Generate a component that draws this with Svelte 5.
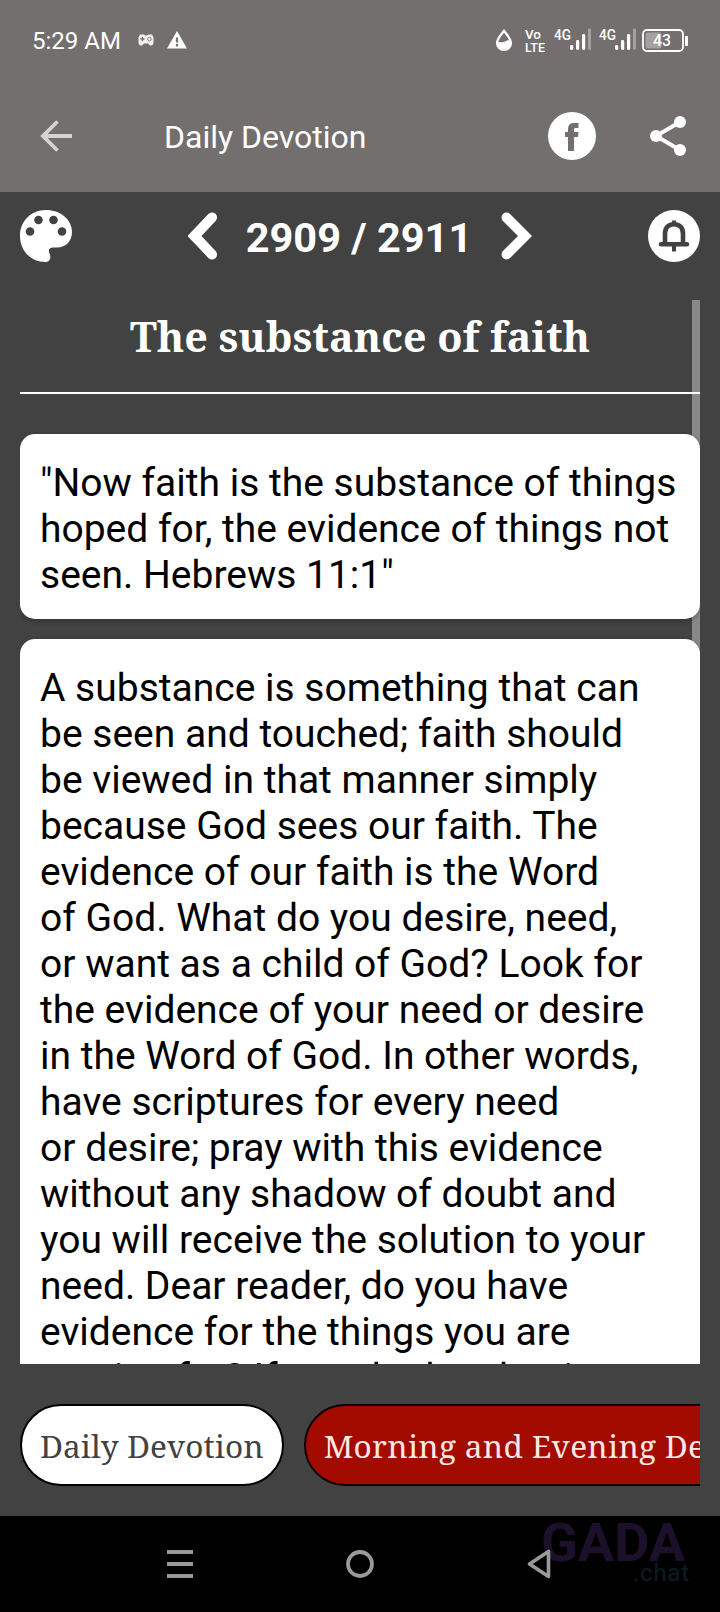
<script lang="ts">
  let page: number = $state(2909);
  const total = 2911;

  const verse = [
    '"Now faith is the substance of things',
    "hoped for, the evidence of things not",
    'seen. Hebrews 11:1"',
  ];

  const body = [
    "A substance is something that can",
    "be seen and touched; faith should",
    "be viewed in that manner simply",
    "because God sees our faith. The",
    "evidence of our faith is the Word",
    "of God. What do you desire, need,",
    "or want as a child of God? Look for",
    "the evidence of your need or desire",
    "in the Word of God. In other words,",
    "have scriptures for every need",
    "or desire; pray with this evidence",
    "without any shadow of doubt and",
    "you will receive the solution to your",
    "need. Dear reader, do you have",
    "evidence for the things you are",
    "praying for? If you do then begin",
  ];

  function prev() {
    if (page > 1) page -= 1;
  }

  function next() {
    if (page < total) page += 1;
  }
</script>

{#snippet signal()}
  <svg class="signal" width="37" height="24" viewBox="0 0 37 24" fill="#fff">
    <text x="0" y="11.5" font-size="14.5" font-weight="500" textLength="17" lengthAdjust="spacingAndGlyphs">4G</text>
    <rect x="16" y="17" width="3.2" height="5" rx="1.4" />
    <rect x="22" y="12" width="3.2" height="10" rx="1.4" />
    <rect x="28" y="6" width="3.2" height="16" rx="1.4" />
    <rect x="34" y="0.5" width="3" height="21.5" rx="1.4" opacity="0.35" />
  </svg>
{/snippet}

<div class="screen">
  <div class="status">
    <span class="time">5:29 AM</span>
    <svg class="gamepad" width="16" height="12" viewBox="0 0 16 12">
      <path d="M2 .5h4l1 1h2l1-1h4l1.500 3v6L14 11.500h-2L10 9.500H6l-2 2H2L.5 9.500v-6z" fill="#f0efef" />
      <path d="M4.500 3v4M2.500 5h4" stroke="#736f6e" stroke-width="1.300" />
      <circle cx="11.500" cy="5" r="1.800" fill="none" stroke="#8b8786" />
    </svg>
    <svg class="warning" width="20" height="18" viewBox="0 0 20 18">
      <path d="M10 0l10 17.500H0z" fill="#fff" />
      <path d="M10 6.500v5M10 13v2.400" stroke="#736f6e" stroke-width="2.200" />
    </svg>
    <div class="indicators">
      <svg class="drop" width="18" height="23" viewBox="0 0 18 23">
        <path d="M9 1.800C6.500 5.200 2 9.800 2 14a7 7 0 0 0 14 0c0-4.200-4.500-8.800-7-12.200z" fill="none" stroke="#fff" stroke-width="2.200" />
        <path d="M2 14c3-2.500 5 .5 8-1.500 2-1.400 3.500-1.500 5-1l1 3a7 7 0 0 1-14 0z" fill="#fff" />
      </svg>
      <svg class="volte" width="20" height="25" viewBox="0 0 20 25">
        <text x="0" y="11" font-size="13.5" font-weight="500" textLength="16" lengthAdjust="spacingAndGlyphs">Vo</text>
        <text x="0" y="23.5" font-size="13.5" font-weight="500" textLength="20" lengthAdjust="spacingAndGlyphs">LTE</text>
      </svg>
      {@render signal()}
      {@render signal()}
      <svg class="battery" width="46" height="23" viewBox="0 0 46 23">
        <rect x="1" y="1" width="40" height="21" rx="4" fill="none" stroke="#fff" stroke-width="1.800" />
        <rect x="3.500" y="3.500" width="16" height="16" rx="2" fill="#a4a1a0" />
        <rect x="43" y="7" width="3" height="10" rx="1" fill="#fff" />
        <text x="11" y="17" font-size="16.500" font-weight="500" textLength="18" lengthAdjust="spacingAndGlyphs">43</text>
      </svg>
    </div>
  </div>

  <header>
    <button class="back" aria-label="Back">
      <svg width="32" height="32" viewBox="0 0 32 32" fill="none" stroke="#d5d4d3" stroke-width="3.800">
        <path d="M32 16H3M17.500 1.500L3 16l14.500 14.500" />
      </svg>
    </button>
    <span class="app-title">Daily Devotion</span>
    <button class="facebook" aria-label="Facebook">
      <svg width="48" height="48" viewBox="0 0 48 48">
        <circle cx="24" cy="24" r="24" fill="#fff" />
        <path d="M20 39V25h-3v-5h3v-2.500c0-4.500 2-6.500 6-6.500h4.500v5H27.500c-1.200 0-1.500.6-1.500 1.600V20h4.500l-.5 5h-4v14z" fill="#736f6e" />
      </svg>
    </button>
    <button class="share" aria-label="Share">
      <svg width="36" height="40" viewBox="0 0 36 40" fill="#fff">
        <path d="M30 6L6 20l24 14" fill="none" stroke="#fff" stroke-width="4" />
        <circle cx="30" cy="6" r="6" />
        <circle cx="6" cy="20" r="6" />
        <circle cx="30" cy="34" r="6" />
      </svg>
    </button>
  </header>

  <div class="pager">
    <button aria-label="Theme">
      <svg width="52" height="52" viewBox="0 0 52 52">
        <path d="M26 0C40 0 52 9 52 22c0 9-6 15.500-15 15.500h-4c-4 0-5 3-3.500 6 2 4 .5 8.500-4 8.500C11 52 0 41 0 26S11 0 26 0z" fill="#fff" />
        <g fill="#424242">
          <circle cx="10" cy="21.500" r="4.300" />
          <circle cx="18.500" cy="10" r="4.300" />
          <circle cx="33.500" cy="10" r="4.300" />
          <circle cx="42" cy="21.500" r="4.300" />
        </g>
      </svg>
    </button>
    <div class="counter">
      <button aria-label="Previous" onclick={prev}>
        <svg width="30" height="48" viewBox="0 0 30 48" fill="none" stroke="#fff" stroke-width="10" stroke-linecap="round">
          <path d="M24 5.500L6.500 24 24 42.500" />
        </svg>
      </button>
      <span class="count">{page} / {total}</span>
      <button aria-label="Next" onclick={next}>
        <svg width="32" height="48" viewBox="0 0 32 48" fill="none" stroke="#fff" stroke-width="10" stroke-linecap="round">
          <path d="M6.500 5.500L25 24 6.500 42.500" />
        </svg>
      </button>
    </div>
    <button aria-label="Reminder">
      <svg width="52" height="52" viewBox="0 0 52 52">
        <circle cx="26" cy="26" r="26" fill="#fff" />
        <path d="M13 34.300h26M17 33V23.500c0-6 3.500-9.300 9-9.300s9 3.300 9 9.300V33" fill="none" stroke="#424242" stroke-width="4.600" stroke-linecap="round" />
        <path d="M26 10.500v4M26 36v5.500" stroke="#424242" stroke-width="4" />
      </svg>
    </button>
  </div>

  <main>
    <div class="scrollbar"></div>
    <h1>The substance of faith</h1>
    <div class="card">
      {#each verse as line}
        <p>{line}</p>
      {/each}
    </div>
    <div class="card">
      {#each body as line}
        <p>{line}</p>
      {/each}
    </div>
  </main>

  <div class="tabs">
    <button class="tab active">Daily Devotion</button>
    <button class="tab">Morning and Evening Devotion</button>
  </div>

  <nav>
    <svg width="26" height="28" viewBox="0 0 26 28" stroke="#999" stroke-width="4">
      <path d="M0 2h26M0 14h26M0 26h26" />
    </svg>
    <svg width="28" height="28" viewBox="0 0 28 28" fill="none" stroke="#999" stroke-width="3.800">
      <circle cx="14" cy="14" r="12" />
    </svg>
    <svg width="24" height="30" viewBox="0 0 24 30" fill="none" stroke="#999" stroke-width="3.600" stroke-linejoin="round">
      <path d="M21.500 2.500v25L2.500 15z" />
    </svg>
    <svg class="watermark" width="150" height="64" viewBox="0 0 150 64">
      <text x="0" y="41" font-size="53" font-weight="700" textLength="144" lengthAdjust="spacingAndGlyphs">GADA</text>
      <text class="dot-chat" x="92" y="61" font-size="24" textLength="56">.chat</text>
    </svg>
  </nav>
</div>

<style>
  :global(body) {
    margin: 0;
    background: #424242;
  }
  .screen {
    display: flex;
    flex-direction: column;
    width: 720px;
    height: 1612px;
    overflow: hidden;
    background: #424242;
    font-family: Roboto, sans-serif;
  }
  button {
    padding: 0;
    border: none;
    background: none;
    font: inherit;
    cursor: pointer;
  }
  svg {
    display: block;
    flex-shrink: 0;
  }
  svg text {
    fill: #fff;
  }
  .status {
    display: flex;
    align-items: center;
    box-sizing: border-box;
    height: 80px;
    padding: 0 32px;
    background: #736f6e;
    color: #fff;
  }
  .time {
    width: 106px;
    padding-top: 1px;
    font-size: 24px;
    white-space: nowrap;
  }
  .warning {
    margin-left: 13px;
  }
  .indicators {
    display: flex;
    align-items: center;
    gap: 8px;
    margin-left: auto;
  }
  .volte {
    margin: 0 1px 0 4px;
    overflow: visible;
  }
  .battery {
    margin-left: -2px;
  }
  header {
    display: flex;
    align-items: center;
    box-sizing: border-box;
    height: 112px;
    padding: 0 34px 0 40px;
    background: #736f6e;
    color: #fff;
  }
  .app-title {
    flex: 1;
    margin-left: 92px;
    padding-top: 2px;
    font-size: 32px;
  }
  .share {
    margin-left: 54px;
  }
  .pager {
    display: flex;
    align-items: center;
    justify-content: space-between;
    height: 88px;
    padding: 0 20px;
  }
  .counter {
    display: flex;
    align-items: center;
  }
  .count {
    width: 282px;
    padding-top: 3px;
    color: #fff;
    font-size: 41.5px;
    font-weight: 700;
    text-align: center;
  }
  main {
    position: relative;
    display: flex;
    flex-direction: column;
    height: 1064px;
    margin: 20px 20px 0;
    overflow: hidden;
  }
  .scrollbar {
    position: absolute;
    top: 0;
    right: 0;
    width: 8px;
    height: 400px;
    background: #888;
  }
  h1 {
    position: relative;
    flex-shrink: 0;
    box-sizing: border-box;
    height: 94px;
    margin: 0 0 40px;
    border-bottom: 2px solid #fff;
    color: #fff;
    font: 700 41.2px/73px "Noto Serif", "Droid Serif", serif;
    text-align: center;
  }
  .card {
    position: relative;
    flex-shrink: 0;
    margin-bottom: 20px;
    padding: 26px 20px 21px;
    border-radius: 15px;
    background: #fff;
    box-shadow: 0 2px 5px rgba(0, 0, 0, 0.25);
    color: #000;
  }
  p {
    margin: 0;
    font-size: 39px;
    line-height: 46px;
    white-space: nowrap;
  }
  .tabs {
    display: flex;
    gap: 20px;
    height: 82px;
    margin: 40px 20px 30px;
    overflow: hidden;
  }
  .tab {
    flex-shrink: 0;
    box-sizing: border-box;
    padding: 0 18px;
    border: 2px solid #100000;
    border-radius: 41px;
    background: #a30b00;
    color: #fde8e6;
    font: 31.6px "Noto Serif", "Droid Serif", serif;
    letter-spacing: 0.28px;
  }
  .active {
    border-color: #000;
    background: #fff;
    color: #424242;
    letter-spacing: 0.05px;
  }
  nav {
    position: relative;
    isolation: isolate;
    display: flex;
    align-items: center;
    gap: 153px;
    flex: 1;
    padding-left: 167px;
    background: #000;
  }
  /* sits behind the navigation buttons */
  .watermark {
    position: absolute;
    top: 4px;
    left: 541px;
    z-index: -1;
  }
  .watermark text {
    fill: #1d102b;
  }
  .watermark .dot-chat {
    fill: #0c1c24;
  }
</style>
